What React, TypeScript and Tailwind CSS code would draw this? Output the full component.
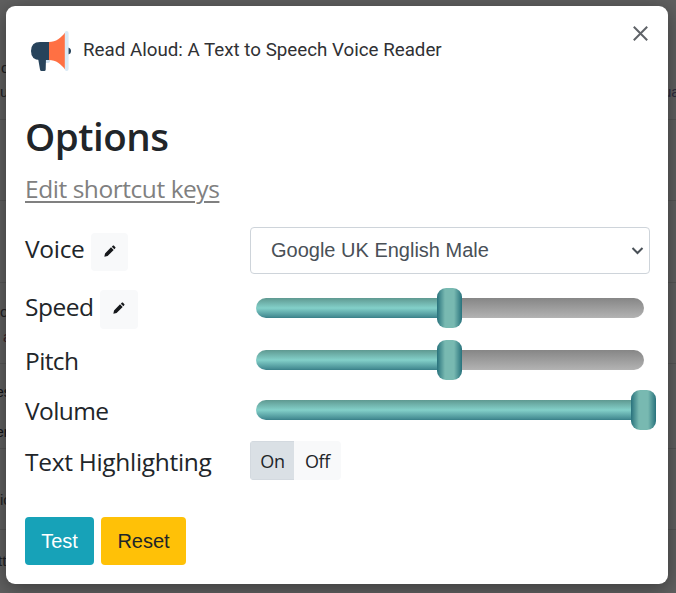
import React from "react";

const seg = "font-['Open_Sans','Noto_Sans',sans-serif] tracking-[-0.3px]";

function Pencil() {
  return (
    <svg width="12" height="12" viewBox="0 0 14 14" fill="#16181b">
      <path d="M.4 13.6 L1.2 9.8 L8.2 2.7 L11.3 5.8 L4.2 12.8 Z M9.1 1.9 L10.5 .7 Q11 .3 11.5 .7 L13.3 2.5 Q13.7 3 13.3 3.5 L12.1 4.9 Z" />
    </svg>
  );
}

function EditButton({ className }: { className: string }) {
  return (
    <button className={`flex items-center justify-center rounded bg-[#f8f9fa] pb-[3px] ${className}`}>
      <Pencil />
    </button>
  );
}

function Slider({ full = false }: { full?: boolean }) {
  return (
    <div className="flex h-10 w-[400px] items-center pl-[6px]">
      <div
        className={`h-5 shrink-0 rounded-l-[10px] bg-[linear-gradient(to_bottom,#5f9991_0%,#83d0c9_50%,#448b92_95%,#367d86_100%)] ${full ? "w-[375px]" : "w-[181px]"}`}
      />
      <div className="h-10 w-[25px] shrink-0 rounded-[9px] bg-[linear-gradient(to_right,#28727c_0%,#78b9b1_32%,#78b9b1_68%,#28727c_100%)]" />
      {!full && (
        <div className="h-5 w-[182px] shrink-0 rounded-r-[10px] bg-[linear-gradient(to_bottom,#868686,#b3b3b3)]" />
      )}
    </div>
  );
}

function Megaphone() {
  return (
    <svg width="42" height="42" viewBox="0 0 42 42">
      <path d="M38 17.5 Q41 18 41 21 Q41 24 38 24.5 Z" fill="#27435b" />
      <path d="M14 29 H20 V31 Q20 33 17 33 H14 Z" fill="#d3e4f2" />
      <path d="M8 28 H16 L15.7 39.5 Q15.6 41 14.3 41 H11.5 Q10.2 41 10 39.5 Z" fill="#27435b" />
      <path d="M19.5 12 H10 Q1 12 1 21 Q1 30 10 30 H19.5 Z" fill="#27435b" />
      <path d="M19 12 C26 12 31 8 35.5 2 V40 C31 34 26 30 19 30 Z" fill="#ff7043" />
      <rect x="34.8" y="1" width="3.8" height="40" rx="1.9" fill="#d9e9f5" />
    </svg>
  );
}

function Backdrop() {
  return (
    <div className="absolute inset-0 overflow-hidden bg-[#606060] font-['Liberation_Sans',sans-serif] text-[15px] leading-[18px] font-normal text-[#202124]">
      {[119, 200, 282, 363, 448, 529].map((y) => (
        <div key={y} className="absolute inset-x-0 h-px bg-[#555]" style={{ top: y }} />
      ))}
      <span className="absolute left-[1px] top-[59px]">o</span>
      <span className="absolute left-0 top-[83px]">u</span>
      <span className="absolute left-[663px] top-[83px] text-[#2b2a3c]">ua</span>
      <span className="absolute left-0 top-[303px]">o</span>
      <span className="absolute left-[3px] top-[328px] text-[#3a2226]">a</span>
      <span className="absolute left-[-4px] top-[383px] text-[14px] text-[#101114]">es</span>
      <span className="absolute left-[-4px] top-[423px] text-[14px] text-[#101114]">er</span>
      <span className="absolute left-0 top-[491px]">ic</span>
      <span className="absolute left-[-2px] top-[552px]">tt</span>
    </div>
  );
}

export default function App() {
  return (
    <div className="relative h-[593px] w-[676px] overflow-hidden pl-[6px] pt-[6px]">
      <Backdrop />
      <main
        className={`relative flex h-[578px] w-[662px] flex-col rounded-[9px] bg-white pl-[19px] text-[24.5px] text-[#212529] shadow-[0_4px_20px_rgba(0,0,0,0.4)] ${seg}`}
      >
        <header className="flex h-[106px] items-start">
          <div className="ml-[5px] mt-[24px]">
            <Megaphone />
          </div>
          <h1 className="ml-[11px] mt-[32px] flex-1 whitespace-nowrap font-['Roboto',sans-serif] text-[18.75px] leading-6 tracking-normal text-[#303134]">
            Read Aloud: A Text to Speech Voice Reader
          </h1>
          <svg className="mr-[20px] mt-[20px]" width="15" height="15" viewBox="0 0 15 15" stroke="#5f6368" strokeWidth="2">
            <path d="M.8 .8 L14.2 14.2 M14.2 .8 L.8 14.2" />
          </svg>
        </header>
        <h2 className="h-[50px] text-[38.5px] font-semibold leading-[48px] tracking-[-0.5px]">Options</h2>
        <a className="mt-[5px] h-[38px] leading-[44px] tracking-[-0.45px] text-[#808080]">
          <span className="underline decoration-2 underline-offset-[3px]">Edit shortcut keys</span>
        </a>
        <div className="mt-[22px] flex h-[47px]">
          <div className="flex w-[225px]">
            <span className="w-[66px] leading-[43px]">Voice</span>
            <EditButton className="mt-[6px] h-[38px] w-[37px]" />
          </div>
          <div className="flex h-[47px] w-[400px] items-center justify-between rounded border border-[#ced4da] pl-[20px] pr-[5px] font-['Liberation_Sans',sans-serif] text-[20px] tracking-normal text-[#495057]">
            <span className="-mt-[2px]">Google UK English Male</span>
            <svg width="13" height="9" viewBox="0 0 13 9" fill="none" stroke="#495057" strokeWidth="2">
              <path d="M1.5 2 L6.5 7 L11.5 2" />
            </svg>
          </div>
        </div>
        <div className="mt-[14px] flex h-[52px]">
          <div className="flex w-[225px]">
            <span className="w-[75px] leading-[38px] tracking-[-0.5px]">Speed</span>
            <EditButton className="mt-[2px] h-[39px] w-[38px]" />
          </div>
          <Slider />
        </div>
        <div className="flex h-[50px]">
          <span className="w-[225px] leading-[42px] tracking-[-0.6px]">Pitch</span>
          <Slider />
        </div>
        <div className="flex h-[51px]">
          <span className="w-[225px] leading-[42px] tracking-[-0.6px]">Volume</span>
          <Slider full />
        </div>
        <div className="flex h-[39px]">
          <span className="w-[225px] leading-[42px]">Text Highlighting</span>
          <div className="flex overflow-hidden rounded text-[18px] leading-[38px]">
            <button className="w-[44px] border border-r-0 border-[#d3d9df] bg-[#dae0e5] leading-[36px]">On</button>
            <button className="w-[47px] bg-[#f8f9fa]">Off</button>
          </div>
        </div>
        <div className="mt-[37px] flex gap-[7px] font-['Liberation_Sans',sans-serif] text-[20px] tracking-normal">
          <button className="h-12 w-[69px] rounded bg-[#17a2b8] text-white">Test</button>
          <button className="h-12 w-[85px] rounded bg-[#ffc107]">Reset</button>
        </div>
      </main>
    </div>
  );
}
